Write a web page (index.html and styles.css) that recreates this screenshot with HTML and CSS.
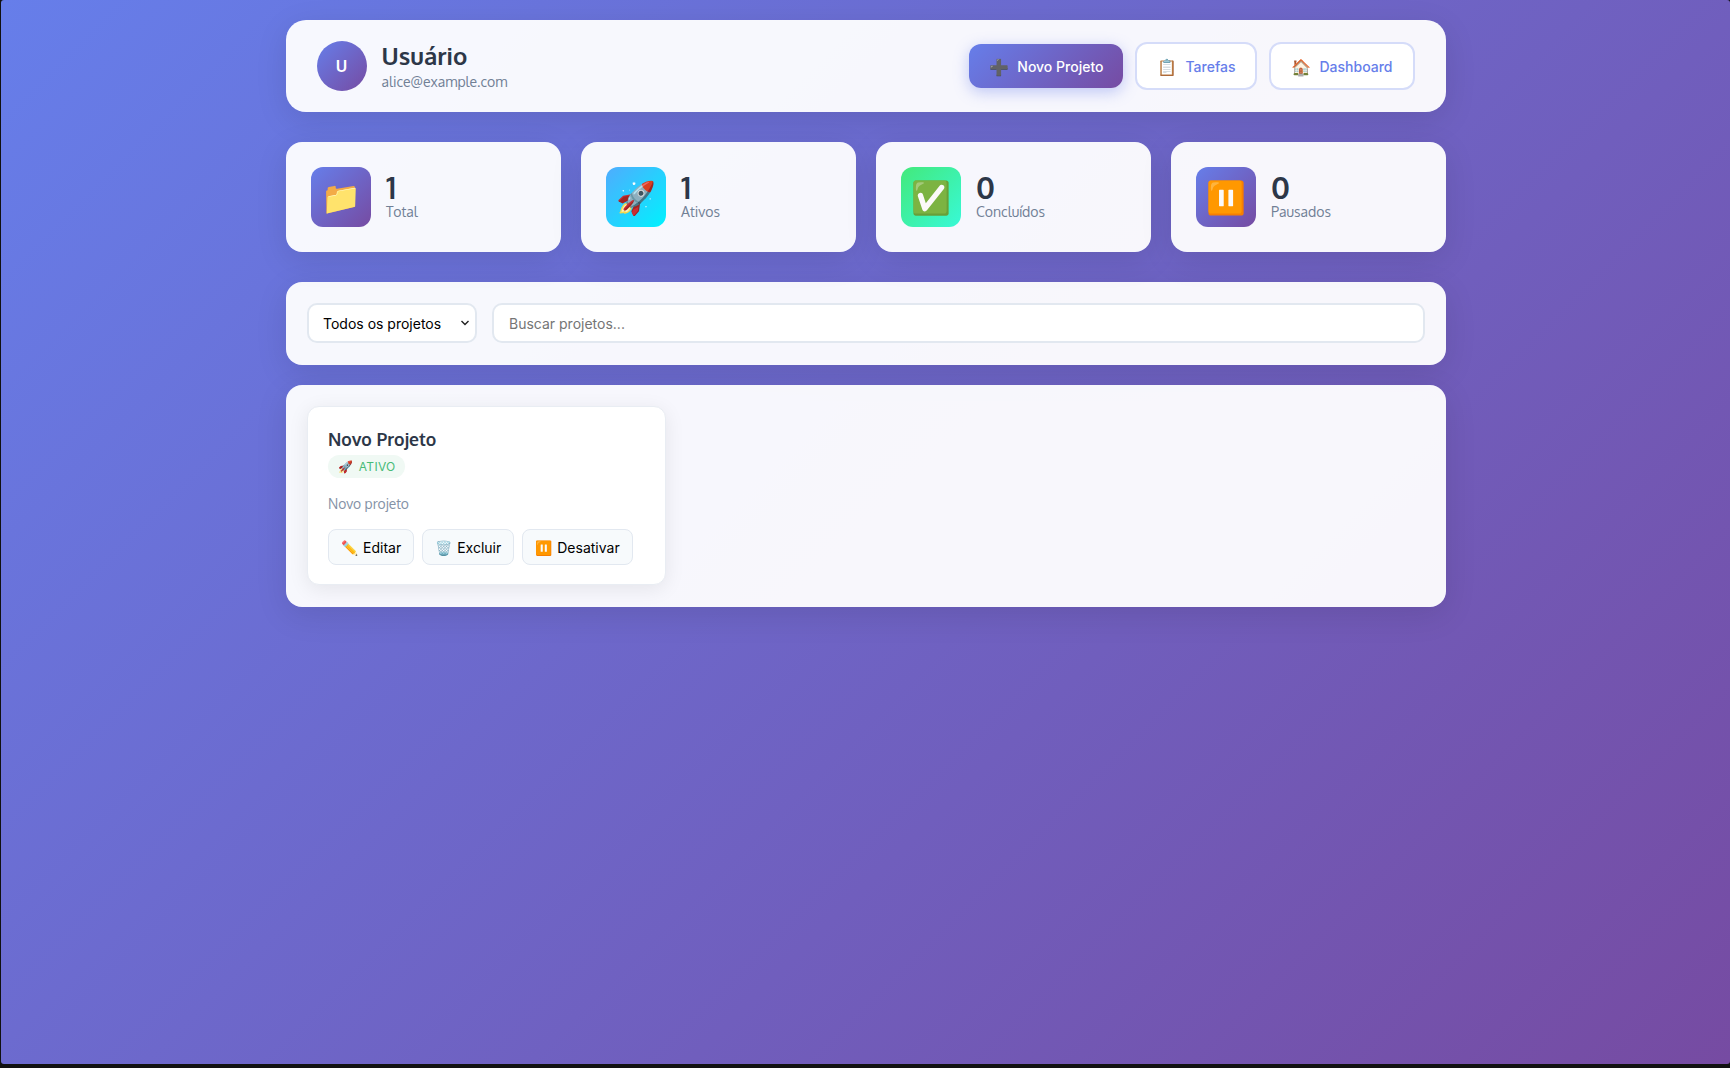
FILE: index.html
```html
<!DOCTYPE html>
<html lang="pt-BR">
<head>
  <meta charset="utf-8">
  <title>Projetos</title>
  <link rel="stylesheet" href="styles.css">
</head>
<body>
  <div class="container">
    <header class="header">
      <div class="user">
        <div class="avatar">U</div>
        <div>
          <h2 class="user-name">Usuário</h2>
          <p class="user-email">alice@example.com</p>
        </div>
      </div>
      <nav class="nav">
        <a class="btn btn-primary" href="#"><span class="btn-icon">➕</span>Novo Projeto</a>
        <a class="btn btn-secondary" href="#"><span class="btn-icon">📋</span>Tarefas</a>
        <a class="btn btn-secondary" href="#"><span class="btn-icon">🏠</span>Dashboard</a>
      </nav>
    </header>

    <section class="stats">
      <div class="stat">
        <div class="stat-icon icon-total">📁</div>
        <div>
          <div class="stat-number">1</div>
          <div class="stat-label">Total</div>
        </div>
      </div>
      <div class="stat">
        <div class="stat-icon icon-active">🚀</div>
        <div>
          <div class="stat-number">1</div>
          <div class="stat-label">Ativos</div>
        </div>
      </div>
      <div class="stat">
        <div class="stat-icon icon-done">✅</div>
        <div>
          <div class="stat-number">0</div>
          <div class="stat-label">Concluídos</div>
        </div>
      </div>
      <div class="stat">
        <div class="stat-icon icon-total">⏸️</div>
        <div>
          <div class="stat-number">0</div>
          <div class="stat-label">Pausados</div>
        </div>
      </div>
    </section>

    <section class="filters">
      <select class="filter-select">
        <option>Todos os projetos</option>
        <option>Ativos</option>
        <option>Concluídos</option>
        <option>Pausados</option>
      </select>
      <input class="filter-search" type="text" placeholder="Buscar projetos...">
    </section>

    <section class="projects">
      <article class="project">
        <h3 class="project-title">Novo Projeto</h3>
        <span class="badge"><span>🚀</span>ATIVO</span>
        <p class="project-desc">Novo projeto</p>
        <div class="project-actions">
          <button class="action"><span>✏️</span>Editar</button>
          <button class="action"><span>🗑️</span>Excluir</button>
          <button class="action"><span>⏸️</span>Desativar</button>
        </div>
      </article>
    </section>
  </div>
</body>
</html>
```

FILE: styles.css
```css
* {
  box-sizing: border-box;
  margin: 0;
  padding: 0;
}
html {
  height: 100%;
  background: #111;
}
body {
  height: 1064px;
  margin-left: 1px;
  padding-left: 1px;
  border-radius: 3px;
  background: linear-gradient(135deg, #667eea 0%, #764ba2 100%);
  font-family: Oxygen, "Noto Sans", sans-serif;
  color: #2d3748;
  overflow: hidden;
}
.container {
  width: 1160px;
  margin: 0 auto;
  padding-top: 20px;
}
.header {
  display: flex;
  justify-content: space-between;
  align-items: center;
  height: 92px;
  padding: 0 31.5px 0 30.5px;
  margin-bottom: 30px;
  background: rgba(255, 255, 255, 0.95);
  border-radius: 20px;
  box-shadow: 0 8px 32px rgba(0, 0, 0, 0.1);
}
.user {
  display: flex;
  align-items: center;
  gap: 15px;
}
.avatar {
  display: flex;
  align-items: center;
  justify-content: center;
  width: 50px;
  height: 50px;
  border-radius: 50%;
  background: linear-gradient(135deg, #667eea, #764ba2);
  color: #fff;
  font-weight: 600;
  font-size: 16px;
}
.user-name {
  font-size: 24px;
  font-weight: 600;
  line-height: 28px;
}
.user-email {
  margin-top: 2px;
  font-size: 14px;
  line-height: 19px;
  color: #718096;
}
.nav {
  display: flex;
  align-items: center;
  gap: 12px;
}
.btn {
  display: flex;
  align-items: center;
  gap: 8px;
  padding: 13px 20px 11px;
  border-radius: 12px;
  font-family: Inter, sans-serif;
  font-size: 14px;
  font-weight: 500;
  line-height: 20px;
  text-decoration: none;
}
.btn-icon {
  font-size: 16px;
}
.btn-primary {
  background: linear-gradient(135deg, #667eea, #764ba2);
  color: #fff;
  box-shadow: 0 4px 15px rgba(102, 126, 234, 0.4);
}
.btn-secondary {
  background: #fff;
  border: 2px solid #d5dcf9;
  color: #667eea;
}
.stats {
  display: grid;
  grid-template-columns: repeat(4, 1fr);
  gap: 20px;
  margin-bottom: 30px;
}
.stat {
  display: flex;
  align-items: center;
  gap: 15px;
  height: 110px;
  padding: 0 25px;
  background: rgba(255, 255, 255, 0.95);
  border-radius: 16px;
  box-shadow: 0 8px 32px rgba(0, 0, 0, 0.1);
}
.stat-icon {
  display: flex;
  align-items: center;
  justify-content: center;
  width: 60px;
  height: 60px;
  padding-bottom: 2px;
  border-radius: 12px;
  font-size: 32px;
}
.icon-total {
  background: linear-gradient(135deg, #667eea, #764ba2);
}
.icon-active {
  background: linear-gradient(135deg, #4facfe, #00f2fe);
}
.icon-done {
  background: linear-gradient(135deg, #43e97b, #38f9d7);
}
.stat-number {
  margin-bottom: 2px;
  font-size: 30px;
  font-weight: 700;
  line-height: 26px;
}
.stat-label {
  font-size: 14px;
  line-height: 19px;
  color: #718096;
}
.filters {
  display: flex;
  align-items: flex-start;
  gap: 15px;
  height: 83px;
  padding: 21px 21px 0;
  margin-bottom: 20px;
  background: rgba(255, 255, 255, 0.95);
  border-radius: 16px;
  box-shadow: 0 8px 32px rgba(0, 0, 0, 0.1);
}
.filter-select,
.filter-search {
  height: 40px;
  border: 2px solid #e2e8f0;
  border-radius: 10px;
  background: #fff;
  font-family: Inter, sans-serif;
  font-size: 14px;
  outline: none;
}
.filter-select {
  appearance: none;
  width: 170px;
  padding: 0 14px;
  color: #000;
  background: #fff url("data:image/svg+xml,%3Csvg xmlns='http://www.w3.org/2000/svg' width='10' height='6' viewBox='0 0 10 6'%3E%3Cpath d='M1.5 1 5 4.5 8.5 1' fill='none' stroke='%23222' stroke-width='1.4'/%3E%3C/svg%3E") no-repeat right 5px center;
}
.filter-search {
  flex: 1;
  padding: 0 15px;
}
.projects {
  padding: 21px 21px 22px;
  background: rgba(255, 255, 255, 0.95);
  border-radius: 16px;
  box-shadow: 0 8px 32px rgba(0, 0, 0, 0.1);
}
.project {
  display: flex;
  flex-direction: column;
  align-items: flex-start;
  width: 359px;
  height: 179px;
  padding: 20px;
  background: #fff;
  border: 1px solid #e9edf3;
  border-radius: 12px;
  box-shadow: 0 4px 20px rgba(0, 0, 0, 0.08);
}
.project-title {
  font-size: 17.6px;
  font-weight: 600;
  line-height: 24px;
}
.badge {
  display: flex;
  align-items: center;
  gap: 5.5px;
  margin-top: 4px;
  padding: 0 9.5px 0 10px;
  border-radius: 12px;
  background: #f0f9f4;
  color: #48bb78;
  font-family: Inter, sans-serif;
  font-size: 12px;
  letter-spacing: 0.3px;
  line-height: 23px;
}
.project-desc {
  margin-top: 16px;
  font-size: 13.8px;
  line-height: 19px;
  color: #8492a6;
}
.project-actions {
  display: flex;
  gap: 8px;
  margin-top: 16px;
}
.action {
  display: flex;
  align-items: center;
  gap: 5px;
  height: 36px;
  padding: 0 12px;
  border: 1px solid #e2e8f0;
  border-radius: 8px;
  background: #f7fafc;
  font-family: Inter, sans-serif;
  font-size: 14px;
  color: #000;
}
```
